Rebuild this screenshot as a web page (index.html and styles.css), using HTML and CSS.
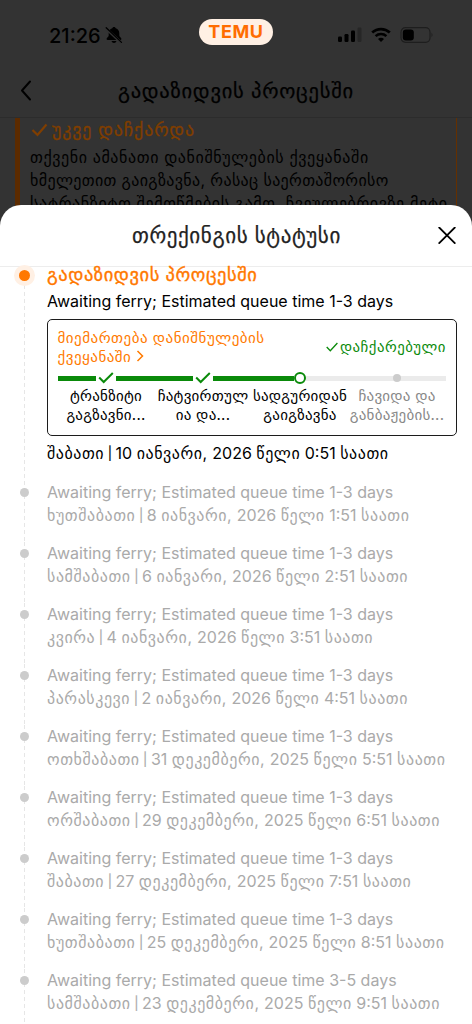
FILE: index.html
```html
<!DOCTYPE html>
<html lang="ka">
<head>
<meta charset="utf-8">
<meta name="viewport" content="width=device-width">
<title>TEMU</title>
<link rel="stylesheet" href="styles.css">
</head>
<body>
<div class="screen">
  <header class="status-bar">
    <div class="clock"><span>21:26</span>
      <svg class="bell" width="18" height="18" viewBox="0 0 18 18"><path d="M9 1c-1 0-1.500.6-1.700 1.300C4.800 3 3.700 5 3.700 7.200v2.300c0 1.200-2.200 2.400-2.200 3.600 0 .5.4.8 1 .8h13c.6 0 1-.3 1-.8 0-1.200-2.200-2.400-2.200-3.600V7.200c0-2.200-1.200-4.200-3.600-4.900C10.500 1.600 10 1 9 1zM6.500 15c.4 1.200 1.300 1.900 2.500 1.900s2.100-.7 2.500-1.900z" fill="#000"/><path d="M1 2.500l15 14" stroke="#333" stroke-width="2.600"/><path d="M1.200 1.800l15.300 14.600" stroke="#000" stroke-width="1.300" stroke-linecap="round"/></svg>
    </div>
    <div class="brand">TEMU</div>
    <div class="indicators">
      <svg width="24" height="16" viewBox="0 0 24 16"><rect x="0" y="9.500" width="4" height="5.500" rx="1.200"/><rect x="6.500" y="7" width="4" height="8" rx="1.200"/><rect x="13" y="3.500" width="4" height="11.500" rx="1.200"/><rect x="19.500" y="0.500" width="4" height="14.500" rx="1.200" fill="#262626"/></svg>
      <svg width="20" height="16" viewBox="0 0 20 16"><path d="M1.200 5.600C6.200.9 13.800.9 18.800 5.600" fill="none" stroke="#000" stroke-width="2.700"/><path d="M4.600 9.100c3-2.800 7.800-2.800 10.800 0" fill="none" stroke="#000" stroke-width="2.600"/><path d="M10 15l-3-3c1.700-1.600 4.300-1.600 6 0z"/></svg>
      <svg width="34" height="16" viewBox="0 0 34 16"><rect x="1" y=".7" width="29" height="14.600" rx="4.500" fill="none" stroke="#1e1e1e" stroke-width="1.200"/><rect x="2.800" y="2.500" width="11" height="11" rx="3"/><path d="M31.500 5.800q2 2.200 0 4.400z" fill="#1e1e1e"/></svg>
    </div>
  </header>
  <nav class="page-nav">
    <svg class="back" width="12" height="22" viewBox="0 0 12 22"><path d="M10 1.500L2 10.500l8 9" fill="none" stroke="#000" stroke-width="2" stroke-linecap="round" stroke-linejoin="round"/></svg>
    <h1 class="page-title">გადაზიდვის პროცესში</h1>
  </nav>
  <main class="notice">
    <h2 class="notice-title"><svg width="17" height="14" viewBox="0 0 17 14"><path d="M1.500 7l5 5L15.500 1.500" fill="none" stroke="#803e00" stroke-width="2.200"/></svg><span>უკვე დაჩქარდა</span></h2>
    <p class="notice-line">თქვენი ამანათი დანიშნულების ქვეყანაში</p>
    <p class="notice-line tight">ხმელეთით გაიგზავნა, რასაც საერთაშორისო</p>
    <p class="notice-line">სატრანზიტო შემოწმების გამო, ჩვეულებრივზე მეტი</p>
  </main>

  <section class="sheet">
    <header class="sheet-header">
      <h2 class="sheet-title">თრექინგის სტატუსი</h2>
      <svg class="close" width="18" height="18" viewBox="0 0 18 18"><path d="M1.200 .5l15.600 15.600M16.800 .5L1.200 16.100" stroke="#000" stroke-width="1.800" stroke-linecap="round"/></svg>
    </header>
    <ol class="timeline">
      <li class="event current">
        <div class="rail"><i class="dot"></i></div>
        <div class="event-body">
          <h3 class="event-title">გადაზიდვის პროცესში</h3>
          <p class="line">Awaiting ferry; Estimated queue time 1-3 days</p>
          <div class="card">
            <div class="card-head">
              <p class="route">მიემართება დანიშნულების<br>ქვეყანაში <svg width="8" height="12" viewBox="0 0 8 12"><path d="M1.500 1l5 5-5 5" fill="none" stroke="#ff7a00" stroke-width="1.500"/></svg></p>
              <p class="fast"><svg width="12" height="10" viewBox="0 0 12 10"><path d="M.7 5l3.600 3.800L11.400 1" fill="none" stroke="#0a8a0a" stroke-width="1.300"/></svg><span>დაჩქარებული</span></p>
            </div>
            <div class="steps">
              <div class="step done"><div class="track"><b></b><svg width="20" height="12" viewBox="0 0 20 12"><path d="M3.200 5.500l4.500 4.500L16.800 1" fill="none" stroke="#0a8a0a" stroke-width="2"/></svg><b></b></div><p>ტრანზიტი<br>გაგზავნი...</p></div>
              <div class="step done"><div class="track"><b></b><svg width="20" height="12" viewBox="0 0 20 12"><path d="M3.200 5.500l4.500 4.500L16.800 1" fill="none" stroke="#0a8a0a" stroke-width="2"/></svg><b></b></div><p>ჩატვირთულ<br>ია და...</p></div>
              <div class="step now"><div class="track"><b></b><i></i><b></b></div><p>სადგურიდან<br>გაიგზავნა</p></div>
              <div class="step next"><div class="track"><b></b><i></i><b></b></div><p>ჩავიდა და<br>განბაჟების...</p></div>
            </div>
          </div>
          <p class="line date">შაბათი <span class="sep">|</span> <span class="num">10</span> იანვარი, <span class="num">2026</span> წელი <span class="num">0:51</span> საათი</p>
        </div>
      </li>
      <li class="event"><div class="rail"><i class="dot"></i></div><div class="event-body"><p class="line">Awaiting ferry; Estimated queue time 1-3 days</p><p class="line date">ხუთშაბათი <span class="sep">|</span> <span class="num">8</span> იანვარი, <span class="num">2026</span> წელი <span class="num">1:51</span> საათი</p></div></li>
      <li class="event"><div class="rail"><i class="dot"></i></div><div class="event-body"><p class="line">Awaiting ferry; Estimated queue time 1-3 days</p><p class="line date">სამშაბათი <span class="sep">|</span> <span class="num">6</span> იანვარი, <span class="num">2026</span> წელი <span class="num">2:51</span> საათი</p></div></li>
      <li class="event"><div class="rail"><i class="dot"></i></div><div class="event-body"><p class="line">Awaiting ferry; Estimated queue time 1-3 days</p><p class="line date">კვირა <span class="sep">|</span> <span class="num">4</span> იანვარი, <span class="num">2026</span> წელი <span class="num">3:51</span> საათი</p></div></li>
      <li class="event"><div class="rail"><i class="dot"></i></div><div class="event-body"><p class="line">Awaiting ferry; Estimated queue time 1-3 days</p><p class="line date">პარასკევი <span class="sep">|</span> <span class="num">2</span> იანვარი, <span class="num">2026</span> წელი <span class="num">4:51</span> საათი</p></div></li>
      <li class="event"><div class="rail"><i class="dot"></i></div><div class="event-body"><p class="line">Awaiting ferry; Estimated queue time 1-3 days</p><p class="line date">ოთხშაბათი <span class="sep">|</span> <span class="num">31</span> დეკემბერი, <span class="num">2025</span> წელი <span class="num">5:51</span> საათი</p></div></li>
      <li class="event"><div class="rail"><i class="dot"></i></div><div class="event-body"><p class="line">Awaiting ferry; Estimated queue time 1-3 days</p><p class="line date">ორშაბათი <span class="sep">|</span> <span class="num">29</span> დეკემბერი, <span class="num">2025</span> წელი <span class="num">6:51</span> საათი</p></div></li>
      <li class="event"><div class="rail"><i class="dot"></i></div><div class="event-body"><p class="line">Awaiting ferry; Estimated queue time 1-3 days</p><p class="line date">შაბათი <span class="sep">|</span> <span class="num">27</span> დეკემბერი, <span class="num">2025</span> წელი <span class="num">7:51</span> საათი</p></div></li>
      <li class="event"><div class="rail"><i class="dot"></i></div><div class="event-body"><p class="line">Awaiting ferry; Estimated queue time 1-3 days</p><p class="line date">ხუთშაბათი <span class="sep">|</span> <span class="num">25</span> დეკემბერი, <span class="num">2025</span> წელი <span class="num">8:51</span> საათი</p></div></li>
      <li class="event"><div class="rail"><i class="dot"></i></div><div class="event-body"><p class="line">Awaiting ferry; Estimated queue time 3-5 days</p><p class="line date">სამშაბათი <span class="sep">|</span> <span class="num">23</span> დეკემბერი, <span class="num">2025</span> წელი <span class="num">9:51</span> საათი</p></div></li>
    </ol>
  </section>
</div>
</body>
</html>
```
FILE: styles.css
```css
* { box-sizing: border-box; margin: 0; padding: 0; }
body { background: #333; font-family: Inter, "DejaVu Sans", sans-serif; font-weight: 400; }
h1, h2, h3 { font-weight: 400; }
svg { display: block; flex: none; }
.screen { width: 472px; height: 1024px; overflow: hidden; display: flex; flex-direction: column; position: relative; color: #000; white-space: nowrap; }
.status-bar { height: 65px; flex: none; display: grid; grid-template-columns: 199px 74px 1fr; align-items: start; }
.clock { display: flex; padding: 25px 0 0 49px; font-size: 20px; line-height: 22px; font-weight: 500; gap: 4px; }
.bell { margin-top: 1px; }
.brand { margin-top: 19px; height: 26px; border-radius: 13px; background: #fff0e4; color: #ff6d00; font: 700 18px/26px Inter, sans-serif; letter-spacing: .6px; text-align: center; }
.indicators { display: flex; padding: 27px 0 0 65px; gap: 9px; }
.page-nav { height: 53px; flex: none; display: flex; align-items: center; padding-left: 20px; border-bottom: 1px solid #2c2c2c; }
.page-title { font-size: 20.500px; line-height: 24px; letter-spacing: .75px; margin-left: 86px; -webkit-text-stroke: .25px; }
.notice { height: 110px; flex: none; margin: 0 15px; border-left: 5px solid #5c2b00; border-right: 1px solid #653000; padding: 0 0 0 10px; color: #000; }
.notice-title { display: flex; align-items: center; gap: 4px; font-size: 18px; line-height: 24px; letter-spacing: .85px; color: #803e00; padding-left: 1px; -webkit-text-stroke: .3px; }
.notice-line { font-size: 16px; line-height: 23px; letter-spacing: .6px; }
.notice-line.tight { letter-spacing: .35px; }
.notice-title + .notice-line { margin-top: 4px; }
.sheet { position: absolute; inset: 205px 0 0; background: #fff; border-radius: 21px 21px 0 0; overflow: hidden; }
.sheet-header { height: 62px; display: flex; align-items: center; border-bottom: 1px solid #ededed; padding-left: 132px; }
.sheet-title { font-size: 21px; line-height: 26px; letter-spacing: .6px; width: 306px; color: #222; -webkit-text-stroke: .25px; }
.timeline { list-style: none; display: flex; flex-direction: column; }
.event { display: flex; height: 61px; color: #aaa; }
.rail { width: 47px; flex: none; padding: 7px 0 0 20px; background: repeating-linear-gradient(#e6e6e6 0 4px, transparent 4px 7px) 24px 0 / 1px 100% no-repeat; }
.dot { display: block; width: 9px; height: 9px; border-radius: 50%; background: #ccc; }
.line { font-size: 16px; line-height: 23px; }
.date { letter-spacing: .55px; word-spacing: -.55px; }
.num { letter-spacing: 0; }
.sep { font-size: 13px; line-height: 1; vertical-align: 1px; margin: 0 -1px; letter-spacing: 0; -webkit-text-stroke: .2px; }
.event.current { height: 214px; color: #000; }
.current .rail { padding: 3px 0 0 19px; background-position: 24px 18px; }
.current .dot { width: 11px; height: 11px; background: #ff7800; box-shadow: 0 0 0 5px #fff0e4; }
.event-title { font-size: 18.500px; line-height: 24px; letter-spacing: .55px; margin-top: -5px; color: #ff7800; -webkit-text-stroke: .35px; }
.current .line { margin-top: 3px; }
.current .event-title + .line { margin-top: 4px; }
.card { width: 410px; height: 117px; margin: 6px 0 6px -.5px; border: 1.500px solid #1c1c1c; border-radius: 5px; padding: 8px 10px; }
.card-head { display: flex; justify-content: space-between; align-items: center; font-size: 15px; line-height: 19px; letter-spacing: .5px; }
.route { color: #ff7a00; }
.route svg { display: inline-block; }
.fast { display: flex; align-items: center; gap: 2px; color: #0a8a0a; font-size: 14.800px; }
.fast span { margin-right: -.5px; }
.steps { display: grid; grid-template-columns: repeat(4, 1fr); font-size: 15px; line-height: 19px; letter-spacing: .25px; text-align: center; margin-top: 6px; }
.step p { margin: 0 -10px; }
.track { display: flex; align-items: center; height: 12px; margin-bottom: 2px; }
.track b { flex: 1; height: 5px; background: #0a8a0a; }
.now i { width: 12px; height: 12px; border: 2.500px solid #0a8a0a; border-radius: 50%; background: #fff; }
.now b:last-child, .next b { background: #ebebeb; }
.next i { width: 8px; height: 8px; border-radius: 50%; background: #ccc; margin: 0 -1px; position: relative; }
.next { color: #888; }
```
